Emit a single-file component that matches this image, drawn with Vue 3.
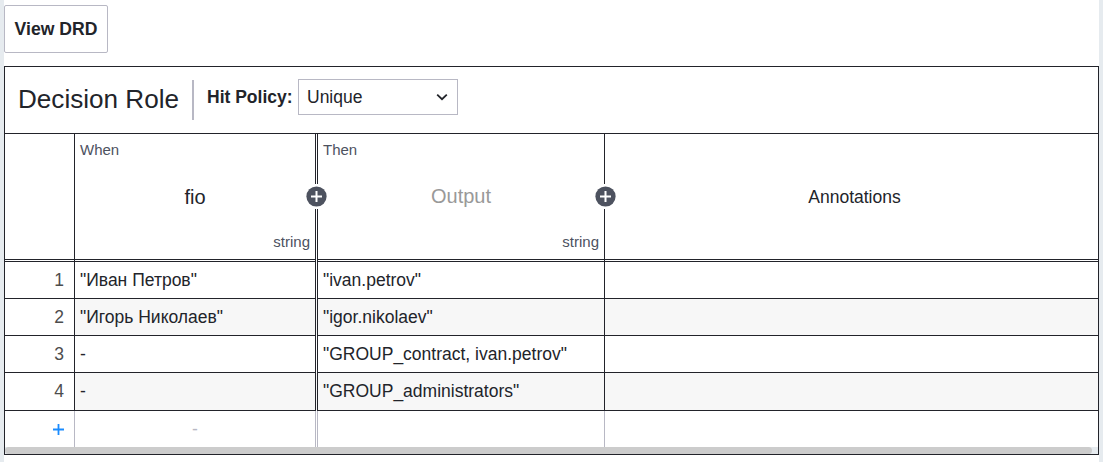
<script setup>
const rules = [
  { id: 1, input: '"Иван Петров"', output: '"ivan.petrov"' },
  { id: 2, input: '"Игорь Николаев"', output: '"igor.nikolaev"' },
  { id: 3, input: '-', output: '"GROUP_contract, ivan.petrov"' },
  { id: 4, input: '-', output: '"GROUP_administrators"' },
]
</script>

<template>
  <main class="page">
    <button class="view-drd">View DRD</button>
    <section class="decision">
      <header class="toolbar">
        <h1 class="title">Decision Role</h1>
        <div class="divider"></div>
        <span class="policy-label">Hit Policy:</span>
        <div class="select">
          <span>Unique</span>
          <svg width="12" height="8" viewBox="0 0 12 8"><path d="M1.2 1.6 6 6.2l4.8-4.6" fill="none" stroke="#22242a" stroke-width="1.8" /></svg>
        </div>
      </header>

      <div class="row head">
        <div class="cell index"><div class="inner"></div></div>
        <div class="cell input">
          <div class="inner">
            <span class="clause">When</span>
            <span class="name">fio</span>
            <span class="type">string</span>
          </div>
          <div class="add"><svg width="21" height="21" viewBox="0 0 21 21"><circle cx="10.5" cy="10.5" r="10.1" fill="#4d525f" /><path d="M10.5 5v11M5 10.5h11" stroke="#fff" stroke-width="2" /></svg></div>
        </div>
        <div class="cell output">
          <div class="inner">
            <span class="clause">Then</span>
            <span class="name placeholder">Output</span>
            <span class="type">string</span>
          </div>
          <div class="add"><svg width="21" height="21" viewBox="0 0 21 21"><circle cx="10.5" cy="10.5" r="10.1" fill="#4d525f" /><path d="M10.5 5v11M5 10.5h11" stroke="#fff" stroke-width="2" /></svg></div>
        </div>
        <div class="cell"><div class="inner"><span class="name annotations">Annotations</span></div></div>
      </div>

      <div v-for="rule in rules" :key="rule.id" class="row rule">
        <div class="cell index"><div class="inner">{{ rule.id }}</div></div>
        <div class="cell input"><div class="inner">{{ rule.input }}</div></div>
        <div class="cell output"><div class="inner">{{ rule.output }}</div></div>
        <div class="cell"><div class="inner"></div></div>
      </div>

      <div class="row new">
        <div class="cell index">
          <svg width="11" height="11" viewBox="0 0 11 11"><path d="M5.5 0v11M0 5.5h11" stroke="#1a8cff" stroke-width="1.8" /></svg>
        </div>
        <div class="cell input"><span>-</span></div>
        <div class="cell output"></div>
        <div class="cell"></div>
      </div>
      <div class="scrollbar"><div class="thumb"></div></div>
    </section>
  </main>
</template>

<style>
body {
  background: #e6ebef;
}
</style>

<style scoped>
.page {
  box-sizing: border-box;
  height: 462px;
  margin: 0 4px;
  padding-top: 5px;
  background: #fff;
  color: #22242a;
  font-family: "Liberation Sans", Arial, sans-serif;
  font-size: 17.5px;
}
.view-drd {
  display: block;
  box-sizing: border-box;
  width: 104px;
  height: 48px;
  padding: 0;
  border: 1px solid #b8b8c4;
  border-radius: 2px;
  background: #fff;
  color: #22242a;
  font: bold 17.6px "Liberation Sans", Arial, sans-serif;
}
.decision {
  margin-top: 13px;
  border: 1px solid #22232a;
}
.toolbar {
  display: flex;
  height: 66px;
  border-bottom: 1px solid #22232a;
}
.title {
  width: 174px;
  margin: 0 0 0 13px;
  font-size: 26.1px;
  font-weight: normal;
  line-height: 64px;
  white-space: nowrap;
}
.divider {
  width: 2px;
  height: 40px;
  margin-top: 13px;
  background: #b8b8c4;
}
.policy-label {
  width: 91px;
  margin-left: 13px;
  font-weight: bold;
  line-height: 60px;
  white-space: nowrap;
}
.select {
  display: flex;
  box-sizing: border-box;
  align-items: center;
  justify-content: space-between;
  width: 160px;
  height: 36px;
  margin-top: 12px;
  padding: 0 9px 0 8px;
  border: 1px solid #b8b8c4;
}
.row {
  display: grid;
  grid-template-columns: 70px 243px 287px 493px;
  height: 37px;
}
.cell {
  position: relative;
  border-right: 1px solid #22232a;
}
.cell.input {
  border-right: 3px double #22232a;
}
.cell:last-child {
  border-right: 0;
}
.inner {
  box-sizing: border-box;
  height: 100%;
  padding: 0 5px;
  border-bottom: 1px solid #22232a;
  line-height: 36px;
  white-space: nowrap;
}
.head {
  height: 128px;
}
.head .inner {
  display: grid;
  grid-template-rows: 30px 65px 24px;
  border-bottom: 3px double #22232a;
  line-height: normal;
}
.clause,
.type {
  align-self: center;
  color: #4d525f;
  font-size: 15px;
}
.type {
  justify-self: end;
}
.name {
  grid-row: 2;
  align-self: center;
  justify-self: center;
  padding-top: 1px;
  font-size: 20px;
}
.name.placeholder {
  padding-top: 0;
  color: #999;
}
.name.annotations {
  padding: 2px 0 0 6px;
  font-size: 17.5px;
}
.add {
  position: absolute;
  z-index: 1;
  top: 50px;
  right: -12px;
  display: flex;
  align-items: center;
  height: 25px;
  background: #fff;
}
.rule:nth-child(2n + 4) .cell:not(.index) {
  background: #f7f7f7;
}
.rule:nth-child(6) {
  height: 38px;
}
.rule .index .inner {
  padding-right: 10px;
  color: #4d4d4d;
  text-align: right;
}
.new {
  height: 36px;
}
.new .cell {
  display: flex;
  align-items: center;
  justify-content: center;
  border-color: #b8b8c4;
  color: #b8b8c4;
}
.new .index {
  justify-content: flex-end;
  padding-right: 10px;
}
.scrollbar {
  height: 7px;
  background: #e6ebef;
}
.thumb {
  width: 1087px;
  height: 7px;
  border-radius: 4px;
  background: #ccc;
}
</style>
